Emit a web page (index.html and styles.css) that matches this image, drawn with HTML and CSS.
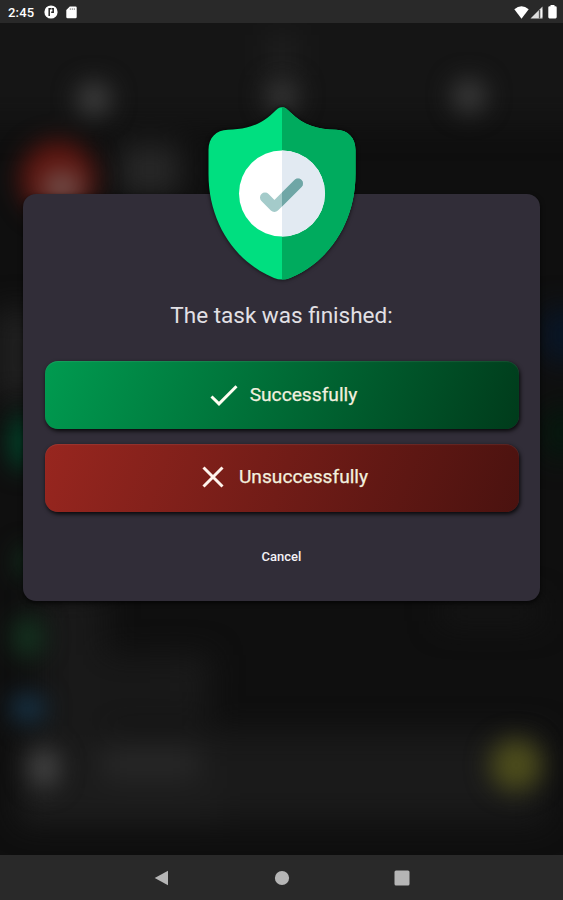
FILE: index.html
```html
<!DOCTYPE html>
<html lang="en">
<head>
<meta charset="utf-8">
<title>Task result</title>
<link rel="stylesheet" href="styles.css">
</head>
<body>
<div class="screen">
  <header class="status-bar">
    <span class="clock">2:45</span>
    <svg class="status-app" viewBox="0 0 14 14" width="14" height="14"><circle cx="7" cy="7" r="6.6" fill="#fff"/><path d="M5.2 11V3.8H7.4M7.8 3.8H9.2V7.2H7.2" fill="none" stroke="#292929" stroke-width="1.5"/></svg>
    <svg class="status-card" viewBox="0 0 11 13" width="11" height="13"><path d="M3.8.5H9.5Q10.7.5 10.7 1.7V11Q10.7 12.3 9.5 12.3H1.6Q.3 12.3.3 11V4Z" fill="#fff"/><path d="M4.3 2.2V4M6.3 2.2V4M8.3 2.2V4" stroke="#777" stroke-width=".8"/></svg>
    <div class="status-right">
      <svg viewBox="0 0 15 13" width="15" height="13"><path d="M.3 3.2Q7.5-2.6 14.7 3.2L7.5 12.7Z" fill="#fff"/></svg>
      <svg viewBox="0 0 13 13" width="13" height="13"><path d="M.5 12.5L12.5.5V12.5Z" fill="#ddd"/><path d="M9.5 4V12.5" stroke="#555" stroke-width="1.3"/><path d="M11.7 3.5V11" stroke="#fff"/></svg>
      <svg class="battery" viewBox="0 0 9 14" width="9" height="14"><path d="M2.5 0H6.5V1.3H7.5Q8.7 1.3 8.7 2.5V12Q8.7 13.4 7.5 13.4H1.5Q.3 13.4.3 12V2.5Q.3 1.3 1.5 1.3H2.5Z" fill="#fff"/></svg>
    </div>
  </header>

  <main class="stage">
    <svg class="backdrop" viewBox="0 23 563 832" width="563" height="832" aria-hidden="true">
      <defs>
        <filter id="soft" filterUnits="userSpaceOnUse" x="-60" y="0" width="700" height="900" color-interpolation-filters="sRGB"><feGaussianBlur stdDeviation="12"/></filter>
        <filter id="wide" filterUnits="userSpaceOnUse" x="-60" y="-40" width="700" height="940" color-interpolation-filters="sRGB"><feGaussianBlur stdDeviation="15"/></filter>
      </defs>
      <rect y="23" width="563" height="832" fill="#0f0f0f"/>
      <g filter="url(#wide)">
        <rect x="-60" y="-40" width="690" height="165" fill="#151515"/>
        <rect x="20" y="732" width="524" height="90" fill="#1a1a1a"/>
        <rect x="40" y="590" width="65" height="150" fill="#191919"/>
        <rect x="100" y="655" width="110" height="70" fill="#181818"/>
        <rect x="160" y="655" width="50" height="30" fill="#1a1a1a"/>
        <rect x="100" y="750" width="100" height="26" fill="#2b2b2b"/>
        <rect x="20" y="800" width="200" height="20" fill="#202020"/>
        <rect x="440" y="600" width="100" height="24" fill="#151515"/>
        <rect x="120" y="145" width="60" height="50" fill="#282828"/>
        <rect x="-5" y="310" width="45" height="90" fill="#202020"/>
        <rect x="545" y="310" width="35" height="50" fill="#07172c"/>
        <rect x="545" y="410" width="35" height="45" fill="#03190d"/>
        <rect x="270" y="35" width="24" height="40" fill="#222"/>
      </g>
      <g filter="url(#soft)">
        <circle cx="94" cy="99" r="17" fill="#404040"/>
        <circle cx="282" cy="96" r="17" fill="#363636"/>
        <circle cx="469" cy="96" r="17" fill="#3c3c3c"/>
        <circle cx="58" cy="179" r="38" fill="#601610"/>
        <ellipse cx="62" cy="187" rx="20" ry="16" fill="#70514d"/>
        <ellipse cx="22" cy="442" rx="13" ry="28" fill="#00452a"/>
        <ellipse cx="28" cy="562" rx="11" ry="15" fill="#123520"/>
        <ellipse cx="28" cy="637" rx="16" ry="21" fill="#143420"/>
        <ellipse cx="28" cy="708" rx="18" ry="14" fill="#17354a"/>
        <ellipse cx="44" cy="768" rx="16" ry="20" fill="#454545"/>
        <circle cx="516" cy="765" r="26" fill="#4d4d1c"/>
      </g>
    </svg>

    <section class="dialog">
      <svg class="shield" viewBox="0 0 148 173" width="148" height="173" aria-hidden="true">
        <defs><clipPath id="right"><rect x="74" y="0" width="74" height="173"/></clipPath></defs>
        <path d="M74 .3C71 .3 69 2 65.500 5.500C53 18 38 22.500 20 22.800C8 23 .5 31 .5 43V67C.5 113 25 154 66 171Q74 174.200 82 171C123 154 147.500 113 147.500 67V43C147.500 31 140 23 128 22.800C110 22.500 95 18 82.500 5.500C79 2 77 .3 74 .3Z" fill="#00df80"/>
        <path clip-path="url(#right)" d="M74 .3C71 .3 69 2 65.500 5.500C53 18 38 22.500 20 22.800C8 23 .5 31 .5 43V67C.5 113 25 154 66 171Q74 174.200 82 171C123 154 147.500 113 147.500 67V43C147.500 31 140 23 128 22.800C110 22.500 95 18 82.500 5.500C79 2 77 .3 74 .3Z" fill="#00ab5e"/>
        <circle cx="74" cy="86.500" r="43" fill="#fff"/>
        <circle cx="74" cy="86.500" r="43" fill="#e2eaf2" clip-path="url(#right)"/>
        <g fill="none" stroke-width="10" stroke-linecap="round" stroke-linejoin="round">
          <path d="M57 90.500L66.400 100L90 76.500" stroke="#a4cbca"/>
          <path d="M57 90.500L66.400 100L90 76.500" stroke="#6fa6a6" clip-path="url(#right)"/>
        </g>
      </svg>
      <h1 class="title">The task was finished:</h1>
      <button class="choice choice-success">
        <svg viewBox="0 0 28 22" width="28" height="22"><path d="M1.500 12.500L9 19.800L26.500 2.300" fill="none" stroke="#fffef2" stroke-width="3"/></svg>
        <span>Successfully</span>
      </button>
      <button class="choice choice-fail">
        <svg viewBox="0 0 22 22" width="22" height="22"><path d="M1.500 1.500L20.500 20.500M20.500 1.500L1.500 20.500" fill="none" stroke="#fff4ed" stroke-width="3"/></svg>
        <span>Unsuccessfully</span>
      </button>
      <button class="cancel">Cancel</button>
    </section>
  </main>

  <nav class="nav-bar">
    <svg viewBox="0 0 16 16" width="16" height="16"><path d="M.7 8L14 .7V15.300Z" fill="#b5b5b5"/></svg>
    <svg viewBox="0 0 16 16" width="16" height="16"><circle cx="8" cy="8" r="7.100" fill="#b5b5b5"/></svg>
    <svg viewBox="0 0 16 16" width="16" height="16"><rect x=".5" y=".5" width="15" height="15" rx="1.500" fill="#b5b5b5"/></svg>
  </nav>
</div>
</body>
</html>
```
FILE: styles.css
```css
* {
  box-sizing: border-box;
}

body {
  margin: 0;
  background: #0f0f0f;
  font-family: Roboto, "Liberation Sans", sans-serif;
}

svg {
  display: block;
  flex: none;
}

button {
  border: 0;
  padding: 0;
  font-family: inherit;
}

.screen {
  display: flex;
  flex-direction: column;
  width: 563px;
  height: 900px;
  overflow: hidden;
}

.status-bar {
  display: flex;
  align-items: center;
  height: 23px;
  padding: 1px 6px 0 8px;
  background: #292929;
  color: #fff;
}

.clock {
  width: 36px;
  font-size: 13px;
  font-weight: 500;
  letter-spacing: 0.2px;
}

.status-card {
  margin-left: 8px;
}

.status-right {
  display: flex;
  align-items: center;
  gap: 1px;
  margin-left: auto;
}

.battery {
  margin-left: 4px;
}

.stage {
  position: relative;
  flex: 1;
  min-height: 0;
  padding: 171px 23px 0;
  overflow: hidden;
}

.backdrop {
  position: absolute;
  inset: 0;
}

.dialog {
  position: relative;
  display: flex;
  flex-direction: column;
  align-items: center;
  width: 517px;
  height: 407px;
  padding: 0 22px;
  border-radius: 13px;
  background: #312d38;
  box-shadow: 0 2px 5px rgba(0, 0, 0, 0.7);
}

.shield {
  margin-top: -87px;
  margin-bottom: 1px;
  filter: drop-shadow(0 0 2px rgba(0, 0, 0, 0.75));
}

.title {
  margin: 20px 0 0;
  color: #e2e0e5;
  font-size: 22.5px;
  font-weight: 400;
  line-height: 28px;
  white-space: nowrap;
}

.choice {
  display: flex;
  align-items: center;
  justify-content: center;
  gap: 12px;
  width: 474px;
  height: 68px;
  padding-left: 4px;
  border-radius: 13px;
  color: #f2f0df;
  font-size: 19.2px;
  -webkit-text-stroke: 0.25px currentColor;
  box-shadow: 1px 2px 4px rgba(0, 0, 0, 0.85), inset 0 1px 1px rgba(255, 255, 255, 0.08);
}

.choice span {
  margin-top: -1px;
}

.choice-success {
  margin-top: 32px;
  background: linear-gradient(110deg, #009b50, #003b1b);
}

.choice-fail {
  gap: 15px;
  margin-top: 15px;
  padding-left: 7px;
  padding-bottom: 2px;
  background: linear-gradient(110deg, #98261f, #4a120f);
}

.cancel {
  margin-top: 34px;
  padding: 2px 8px;
  background: none;
  color: #f4f2f6;
  font-size: 13px;
  font-weight: 500;
  line-height: 18px;
}

.nav-bar {
  display: flex;
  align-items: center;
  justify-content: center;
  gap: 104px;
  height: 45px;
  background: #292929;
}
```
